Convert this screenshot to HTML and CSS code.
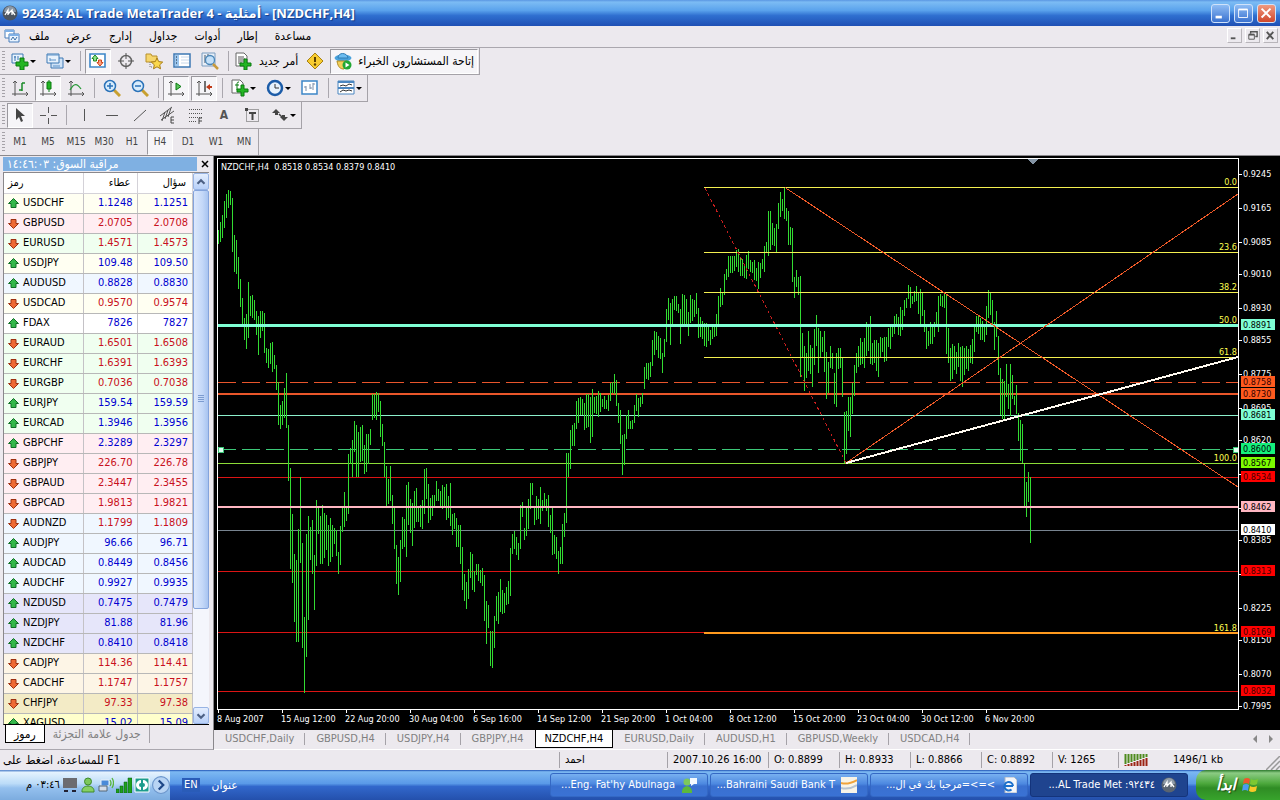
FILE: index.html
```html
<!DOCTYPE html>
<html lang="ar">
<head>
    <meta charset="UTF-8">
    <meta name="viewport" content="width=device-width, initial-scale=1.0">
    <title>92434: AL Trade MetaTrader 4 - أمثلية - [NZDCHF,H4]</title>
    <link rel="stylesheet" href="styles.css">
</head>
<body>
    <header class="titlebar">
        <svg class="icon16" viewBox="0 0 16 16"><circle cx="8" cy="8" r="7.5" fill="#4b5460"/><path d="M2 7a6 6 0 0 1 12 0z" fill="#8b98a6"/><path d="M3 10l3-5v5M6 9l4-4v5M10 6l3 4" stroke="#fff" fill="none" stroke-width="1.3"/></svg>
        <h1>92434: AL Trade MetaTrader 4 - أمثلية - [NZDCHF,H4]</h1>
        <div class="win-buttons">
            <button type="button" class="win-btn" aria-label="minimize"><svg viewBox="0 0 19 19"><path d="M4 12h7v3H4z" fill="#fff"/></svg></button>
            <button type="button" class="win-btn" aria-label="maximize"><svg viewBox="0 0 19 19"><path d="M4 5h10v9H4z" fill="none" stroke="#fff"/><path d="M4 4h10v2H4z" fill="#fff"/></svg></button>
            <button type="button" class="win-btn close" aria-label="close"><svg viewBox="0 0 19 19"><path d="M4 4l10 10M14 4L4 14" stroke="#fff" stroke-width="2.2"/></svg></button>
        </div>
    </header>

    <nav class="menubar">
        <svg class="icon16" viewBox="0 0 16 16"><path d="M1 2h9v8H1z" fill="#fff" stroke="#4a7ebb"/><path d="M1 2h9v2H1z" fill="#7fb0e6"/><path d="M5 6h10v8H5z" fill="#eaf4ff" stroke="#4a7ebb"/><path d="M5 6h10v2H5z" fill="#7fb0e6"/><path d="M7 12l2-3 2 3 2-3" fill="none" stroke="#3a6ea5"/></svg>
        <div class="menu-items">
            <a href="#">ملف</a>
            <a href="#">عرض</a>
            <a href="#">إدارج</a>
            <a href="#">جداول</a>
            <a href="#">أدوات</a>
            <a href="#">إطار</a>
            <a href="#">مساعدة</a>
        </div>
        <div class="mdi-buttons">
            <button type="button" aria-label="minimize"><svg viewBox="0 0 14 14"><path d="M3 9h5v2H3z" fill="#555"/></svg></button>
            <button type="button" aria-label="restore"><svg viewBox="0 0 14 14"><path d="M5 5V3h7v5h-2" fill="none" stroke="#555" stroke-width="1.5"/><path d="M3 6h6v5H3z" fill="none" stroke="#555"/><path d="M3 5h6v2H3z" fill="#555"/></svg></button>
            <button type="button" aria-label="close"><svg viewBox="0 0 14 14"><path d="M3 3l7 8M10 3l-7 8" stroke="#555" stroke-width="2"/></svg></button>
        </div>
    </nav>

    <section class="toolbars">
        <div class="toolbar-row">
            <div class="toolbar">
                <button type="button" class="tool drop" aria-label="new chart"><svg viewBox="0 0 18 18"><path d="M1 2h11v9H1z" fill="#e8f2fc" stroke="#3c78b4"/><path d="M4 4v5M3 5h2M7 4v4" stroke="#3c78b4"/><path d="M9 6h4v4h4v4h-4v4H9v-4H5v-4h4z" fill="#23b523" stroke="#0a7a10"/></svg></button>
                <button type="button" class="tool drop" aria-label="profiles"><svg viewBox="0 0 18 18"><path d="M5 6h12v10H5z" fill="#cfe2f6" stroke="#3c78b4"/><path d="M1 2h12v9H1z" fill="#e8f2fc" stroke="#3c78b4"/><path d="M1 3h12M4 6v3M4 8h6M7 14h7" stroke="#5c92c8"/></svg></button>
                <span class="sep"></span>
                <button type="button" class="tool pressed" aria-label="market watch"><svg viewBox="0 0 18 18"><path d="M1 2h15v13H1z" fill="#fff" stroke="#3c86c8" stroke-width="1.6"/><path d="M6 3l3 3.500H7.500V9h-3V6.500H3z" fill="#8ce08c" stroke="#1e8a1e"/><path d="M11 14l-3-3.500h1.500V8h3v2.500H14z" fill="#f8a080" stroke="#d04418"/></svg></button>
                <button type="button" class="tool" aria-label="data window"><svg viewBox="0 0 18 18"><circle cx="9" cy="9" r="5.500" fill="none" stroke="#666" stroke-width="1.500"/><path d="M9 1v6M9 11v6M1 9h6M11 9h6" stroke="#555"/></svg></button>
                <button type="button" class="tool" aria-label="navigator"><svg viewBox="0 0 18 18"><path d="M1 2h5l1 2h5v6H1z" fill="#f6d66c" stroke="#b8902c"/><path d="M5 10v5h3" stroke="#777" fill="none" stroke-dasharray="1 1"/><path d="M12 6l1.700 3.600 4 .5-3 2.700.8 4-3.500-2-3.500 2 .8-4-3-2.700 4-.5z" fill="#fbd84c" stroke="#a87c14"/></svg></button>
                <button type="button" class="tool" aria-label="terminal"><svg viewBox="0 0 18 18"><path d="M1 2h16v13H1z" fill="#fff" stroke="#3c78b4" stroke-width="1.500"/><path d="M2 3h4v11H2z" fill="#9cc6ee"/><path d="M3 5h1M3 8h1M3 11h1" stroke="#123"/><path d="M8 5h8M8 8h8M8 11h8" stroke="#c8d8ea"/></svg></button>
                <button type="button" class="tool" aria-label="strategy tester"><svg viewBox="0 0 18 18"><path d="M1 1h13v13H1z" fill="#e8eef6" stroke="#7a9cc0"/><path d="M4 3v8M7 2v5" stroke="#456"/><circle cx="9" cy="8" r="4.500" fill="#c4e0f8" stroke="#4a86b8" stroke-width="1.300"/><path d="M12 12l5 5" stroke="#c89a3c" stroke-width="2.500"/></svg></button>
                <span class="sep"></span>
                <button type="button" class="tool text"><svg viewBox="0 0 18 18"><path d="M1 1h8l3 3v10H1z" fill="#fff" stroke="#666"/><path d="M3 5h6M3 7h7M3 9h7M3 11h4" stroke="#555"/><path d="M9 7h3v4h4v3h-4v4H9v-4H5v-3h4z" fill="#23b523" stroke="#0a7a10"/></svg><span>أمر جديد</span></button>
                <button type="button" class="tool" aria-label="metaeditor"><svg viewBox="0 0 18 18"><path d="M9 1l8 8-8 8-8-8z" fill="#f8cc30" stroke="#a88010"/><path d="M9 5v5" stroke="#5a4000" stroke-width="2"/><circle cx="9" cy="12.500" r="1.200" fill="#5a4000"/></svg></button>
                <button type="button" class="tool text pressed"><svg viewBox="0 0 18 18"><ellipse cx="9" cy="6" rx="8.500" ry="3.500" fill="#4aa2dc"/><path d="M4 6c0-6 9-6 10 0z" fill="#6cbcf0" stroke="#2f7cb4"/><path d="M3 9c1 7 4 8 7 8l3-8z" fill="#f2cf58" stroke="#b08c24"/><circle cx="13" cy="13" r="4.500" fill="#22a833"/><path d="M11.500 10.500v5l4-2.500z" fill="#fff"/></svg><span>إتاحة المستشارون الخبراء</span></button>
            </div>
        </div>

        <div class="toolbar-row">
            <div class="toolbar">
                <button type="button" class="tool" aria-label="bar chart"><svg viewBox="0 0 18 18"><path d="M4 2v13h13M2 4l2-2 2 2M15 13l2 2-2 2M1 15h3M4 15v2" fill="none" stroke="#555"/><path d="M11 4v8M11 4h3M8 11h3" stroke="#1a8a2a" stroke-width="1.500"/></svg></button>
                <button type="button" class="tool pressed" aria-label="candlesticks"><svg viewBox="0 0 18 18"><path d="M4 2v13h13M2 4l2-2 2 2M15 13l2 2-2 2M1 15h3M4 15v2" fill="none" stroke="#555"/><path d="M10 1v12" stroke="#0a7a10"/><path d="M8 3h4v7H8z" fill="#23b523" stroke="#0a7a10"/></svg></button>
                <button type="button" class="tool" aria-label="line chart"><svg viewBox="0 0 18 18"><path d="M4 2v13h13M2 4l2-2 2 2M15 13l2 2-2 2M1 15h3M4 15v2" fill="none" stroke="#555"/><path d="M3 11c4-7 7-7 11-1" fill="none" stroke="#2a9a3a" stroke-width="1.300"/></svg></button>
                <span class="sep"></span>
                <button type="button" class="tool" aria-label="zoom in"><svg viewBox="0 0 18 18"><path d="M11 11l6 6" stroke="#c8a030" stroke-width="3"/><circle cx="7" cy="7" r="5.500" fill="#d8ecfc" stroke="#2a72b8" stroke-width="1.500"/><path d="M4 7h6M7 4v6" stroke="#2a72b8" stroke-width="1.500"/></svg></button>
                <button type="button" class="tool" aria-label="zoom out"><svg viewBox="0 0 18 18"><path d="M11 11l6 6" stroke="#c8a030" stroke-width="3"/><circle cx="7" cy="7" r="5.500" fill="#d8ecfc" stroke="#2a72b8" stroke-width="1.500"/><path d="M4 7h6" stroke="#2a72b8" stroke-width="1.500"/></svg></button>
                <span class="sep"></span>
                <button type="button" class="tool pressed" aria-label="auto scroll"><svg viewBox="0 0 18 18"><path d="M4 2v13h13M2 4l2-2 2 2M15 13l2 2-2 2M1 15h3M4 15v2" fill="none" stroke="#555"/><path d="M9 4v7l5-3.500z" fill="#5cc45c" stroke="#0a7a10"/></svg></button>
                <button type="button" class="tool pressed" aria-label="chart shift"><svg viewBox="0 0 18 18"><path d="M4 2v13h13M2 4l2-2 2 2M15 13l2 2-2 2M1 15h3M4 15v2" fill="none" stroke="#555"/><path d="M10 2v11" stroke="#444" stroke-width="1.500"/><path d="M11 8l4-3v2h2v2h-2v2z" fill="#c03a18"/></svg></button>
                <span class="sep"></span>
                <button type="button" class="tool drop" aria-label="indicators"><svg viewBox="0 0 18 18"><path d="M1 1h8l3 3v10H1z" fill="#fff" stroke="#666"/><path d="M8 3c-2 0-2 1-2 3v5M4 6h4" fill="none" stroke="#0a7a10"/><path d="M10 6h3v4h4v3h-4v4h-3v-4H6v-3h4z" fill="#23b523" stroke="#0a7a10"/></svg></button>
                <button type="button" class="tool drop" aria-label="periods"><svg viewBox="0 0 18 18"><circle cx="9" cy="9" r="7" fill="#e8f2fc" stroke="#1c5ca8" stroke-width="2.500"/><path d="M9 5v4h4" fill="none" stroke="#333"/></svg></button>
                <button type="button" class="tool" aria-label="templates"><svg viewBox="0 0 18 18"><path d="M1 2h15v13H1z" fill="#fff" stroke="#3c86c8" stroke-width="1.500"/><path d="M5 7v5M5 8H3M9 5v5M9 9h2M12 4v7M12 5h2" stroke="#7a8ea8"/></svg></button>
                <span class="sep"></span>
                <button type="button" class="tool drop" aria-label="windows"><svg viewBox="0 0 18 18"><path d="M1 2h16v13H1z" fill="#fff" stroke="#4a86c0"/><path d="M1 3h16M1 9h16" stroke="#4a86c0" stroke-width="2"/><path d="M3 7l3-1 3 1 3-2 3 1M3 13l3-2 3 1 3-1 3 1" fill="none" stroke="#333"/></svg></button>
            </div>
        </div>

        <div class="toolbar-row">
            <div class="toolbar">
                <button type="button" class="tool pressed" aria-label="cursor"><svg viewBox="0 0 18 18"><path d="M5 2v12l3-3 2 5 2-1-2-5h4z" fill="#444"/></svg></button>
                <button type="button" class="tool" aria-label="crosshair"><svg viewBox="0 0 18 18"><path d="M9.500 1v6M9.500 12v6M1 9.500h6M12 9.500h6" stroke="#555"/></svg></button>
                <span class="sep"></span>
                <button type="button" class="tool" aria-label="vertical line"><svg viewBox="0 0 18 18"><path d="M9.500 3v12" stroke="#555"/></svg></button>
                <button type="button" class="tool" aria-label="horizontal line"><svg viewBox="0 0 18 18"><path d="M3 9.500h12" stroke="#555"/></svg></button>
                <button type="button" class="tool" aria-label="trendline"><svg viewBox="0 0 18 18"><path d="M3 15L15 4" stroke="#555"/></svg></button>
                <button type="button" class="tool" aria-label="equidistant channel"><svg viewBox="0 0 18 18"><path d="M1 10L13 1M2 14L15 5M3 15l3-9M6 13l3-9M9 11l3-9" stroke="#555" fill="none"/><path d="M15 11h-3v6h3M12 14h3" fill="none" stroke="#444"/></svg></button>
                <button type="button" class="tool" aria-label="fibonacci"><svg viewBox="0 0 18 18"><path d="M2 3.500h14M2 7.500h14M2 11.500h14" stroke="#555" stroke-dasharray="1 1"/><path d="M2 15.500h7" stroke="#555" stroke-dasharray="1 1"/><path d="M15 12h-3v6M12 15h3" fill="none" stroke="#444"/></svg></button>
                <button type="button" class="tool letter">A</button>
                <button type="button" class="tool" aria-label="label"><svg viewBox="0 0 18 18"><path d="M3.500 3.500h12v12h-12z" fill="none" stroke="#555" stroke-dasharray="1 1"/><path d="M2 2h3v3H2z" fill="#444"/><path d="M6 7h7M9.500 7v7" stroke="#444" stroke-width="2"/></svg></button>
                <button type="button" class="tool drop" aria-label="arrows"><svg viewBox="0 0 18 18"><path d="M5 3l4 4-2 0v2H4V7H1z" fill="#444"/><path d="M13 15l-4-4h2V9h3v2h3z" fill="#444"/><path d="M8 8l3 3" stroke="#444" stroke-width="1.500"/></svg></button>
            </div>
        </div>

        <div class="toolbar-row">
            <div class="toolbar">
                <button type="button" class="tool period">M1</button>
                <button type="button" class="tool period">M5</button>
                <button type="button" class="tool period">M15</button>
                <button type="button" class="tool period">M30</button>
                <button type="button" class="tool period">H1</button>
                <button type="button" class="tool period pressed">H4</button>
                <button type="button" class="tool period">D1</button>
                <button type="button" class="tool period">W1</button>
                <button type="button" class="tool period">MN</button>
            </div>
        </div>
    </section>

    <main class="workspace">
        <aside class="market">
            <div class="market-title">
                <h2 dir="rtl">مراقبة السوق: ١٤:٤٦:٠٣</h2>
                <button type="button" aria-label="close"><svg viewBox="0 0 8 8"><path d="M1 1l6 6M7 1L1 7" stroke="#000" stroke-width="1.500"/></svg></button>
            </div>
            <div class="market-list">
                <div class="quotes-wrap">
                    <table class="quotes">
                        <thead>
                            <tr><th>رمز</th><th>عطاء</th><th>سؤال</th></tr>
                        </thead>
                        <tbody id="quotes"></tbody>
                    </table>
                </div>
                <div class="scrollbar">
                    <button type="button" class="scroll-btn" aria-label="up"><svg viewBox="0 0 16 16"><path d="M4 10l4-4 4 4" fill="none" stroke="#4d6185" stroke-width="2.500"/></svg></button>
                    <div class="track">
                        <div class="thumb"><i></i></div>
                    </div>
                    <button type="button" class="scroll-btn" aria-label="down"><svg viewBox="0 0 16 16"><path d="M4 6l4 4 4-4" fill="none" stroke="#4d6185" stroke-width="2.500"/></svg></button>
                </div>
            </div>
            <div class="market-tabs">
                <button type="button" class="active">رموز</button>
                <button type="button">جدول علامة التجزئة</button>
            </div>
        </aside>

        <section class="chart-window">
            <svg class="chart" viewBox="214 156 1066 573">
                <text class="chart-head" x="221" y="170" xml:space="preserve">NZDCHF,H4  0.8518 0.8534 0.8379 0.8410</text>

                <g class="levels">
                    <path d="M218 382.500H1238" stroke="#e8552c" stroke-dasharray="18 6"/>
                    <path d="M218 394H1238" stroke="#e8562a" stroke-width="2"/>
                    <path d="M218 415.500H1238" stroke="#8cf0cc"/>
                    <path d="M218 449.500H1238" stroke="#3cc878" stroke-dasharray="18 6"/>
                    <path d="M218 463.500H1238" stroke="#8cdc38"/>
                    <path d="M218 477.500H1238" stroke="#dc1414"/>
                    <path d="M218 530.500H1238" stroke="#788490"/>
                    <path d="M218 571.500H1238" stroke="#dc1414"/>
                    <path d="M218 632.500H1238" stroke="#dc1414"/>
                    <path d="M218 691.500H1238" stroke="#dc1414"/>
                </g>
                <path id="bars" class="bars"/>
                <g class="levels">
                    <path d="M218 325.500H1238" stroke="#7fffd4" stroke-width="3"/>
                    <path d="M218 507H1238" stroke="#ffb6c1" stroke-width="2"/>
                    <path d="M704 187.500H1238M704 252.500H1238M704 292.500H1238M704 357.500H1238" stroke="#f4f050"/>
                    <path d="M704 633H1238" stroke="#ff9a1e" stroke-width="2"/>
                    <path d="M785 187.500L1238 487" stroke="#f05a28"/>
                    <path d="M846 463L1238 194" stroke="#f05a28"/>
                    <path d="M705 188L846 463" stroke="#c81e1e" stroke-dasharray="3 3"/>
                    <path d="M846 463L1238 357" stroke="#fffaf0" stroke-width="2"/>
                    <path d="M218 447h5v5h-5zM1233 447h5v5h-5z" fill="#dffff2" stroke="#3cc878"/>
                    <path d="M1027 159h11l-5 5z" fill="#8494a4"/>
                </g>
                <path class="frame" d="M217.500 158.500H1238.500V709.500H217.500z"/>
                <g id="fibo" class="fibo"></g>
                <g id="prices"></g>
                <g id="times"></g>
            </svg>

            <div class="chart-tabs">
                <button type="button">USDCHF,Daily</button>
                <button type="button">GBPUSD,H4</button>
                <button type="button">USDJPY,H4</button>
                <button type="button" class="before-active">GBPJPY,H4</button>
                <button type="button" class="active">NZDCHF,H4</button>
                <button type="button">EURUSD,Daily</button>
                <button type="button">AUDUSD,H1</button>
                <button type="button">GBPUSD,Weekly</button>
                <button type="button">USDCAD,H4</button>
                <div class="tab-arrows">
                    <svg viewBox="0 0 24 8"><path d="M6 0v8L2 4zM18 0v8l4-4z" fill="#888"/></svg>
                </div>
            </div>
        </section>
    </main>

    <footer class="statusbar">
        <div class="help"><span dir="rtl">F1 للمساعدة، اضغط على</span></div>
        <div class="cell profile">احمد</div>
        <div class="cell date">2007.10.26 16:00</div>
        <div class="cell">O: 0.8899</div>
        <div class="cell">H: 0.8933</div>
        <div class="cell">L: 0.8866</div>
        <div class="cell">C: 0.8892</div>
        <div class="cell volume">V: 1265</div>
        <div class="cell traffic">
            <svg viewBox="0 0 25 12"><path d="M1.500 0v10M4.500 0v9M7.500 0v8M10.500 0v7M13.500 0v6M16.500 0v5M19.500 0v4M22.500 0v3" stroke="#4e8a1e" stroke-width="2"/><path d="M1.500 11v1M4.500 10v2M7.500 9v3M10.500 8v4M13.500 7v5M16.500 6v6M19.500 5v7M22.500 4v8" stroke="#9c2414" stroke-width="2"/></svg>
            <span>1496/1 kb</span>
        </div>
        <svg class="resize" viewBox="0 0 14 14"><path d="M0 14L14 0M5 14l9-9M10 14l4-4" stroke="#999" stroke-width="1.500"/></svg>
    </footer>

    <footer class="taskbar">
        <div class="tray">
            <time dir="rtl">٠٣:٤٦ م</time>
            <svg class="icon16" viewBox="0 0 16 16"><path d="M1 1h14v10H1z" fill="#6c6c70"/><path d="M2 14h4M10 14h4" stroke="#223" stroke-width="2"/></svg>
            <svg class="icon16" viewBox="0 0 16 16"><circle cx="8" cy="4.500" r="3.500" fill="#7cc85c" stroke="#3e8a2c"/><path d="M2 15c-1-8 13-8 12 0z" fill="#86d064" stroke="#3e8a2c"/></svg>
            <svg class="icon16" viewBox="0 0 16 16"><path d="M3 3h8v6H3z" fill="#4a8ad8" stroke="#e8f0fa"/><path d="M1 9h8v5H1z" fill="#d4dce8" stroke="#567"/><path d="M12 3q2 3 0 6M14 1q3 5 0 10" fill="none" stroke="#58b43c" stroke-width="1.300"/></svg>
            <svg class="icon16" viewBox="0 0 16 16"><path d="M0 12h3v4H0zM4 9h3v7H4zM8 5h3v11H8zM12 1h4v15h-4z" fill="#1ea01e" stroke="#0a5a10" stroke-width=".5"/></svg>
            <svg class="icon16" viewBox="0 0 16 16"><path d="M1 1h14v14H1z" fill="#1c9c8c" stroke="#fff"/><path d="M7 3a5 5 0 0 0 0 10V10a2 2 0 0 1 0-4zM9 3a5 5 0 0 1 0 10v-3a2 2 0 0 0 0-4z" fill="#fff"/></svg>
            <svg class="icon16" viewBox="0 0 16 16"><circle cx="8" cy="8" r="7.500" fill="#b8d4f4" stroke="#6c96cc"/><path d="M6 4l4 4-4 4" fill="none" stroke="#1f4888" stroke-width="2"/></svg>
        </div>
        <span class="lang">EN</span>
        <span class="address">عنوان</span>
        <div class="tasks">
            <button type="button" class="task" dir="rtl"><svg class="icon16" viewBox="0 0 16 16"><circle cx="6" cy="5" r="3.500" fill="#7cc85c"/><path d="M1 16c-1-9 11-9 10 0z" fill="#5cb83c"/><path d="M9 1h7v6h-3l-3 2V7H9z" fill="#f4faff"/></svg><span>Eng. Fat'hy Abulnaga...</span></button>
            <button type="button" class="task" dir="rtl"><svg class="icon16" viewBox="0 0 16 16"><path d="M0 0h16v16H0z" fill="#f8f4e8"/><path d="M0 6q7 2 16-3" fill="none" stroke="#f0a43c" stroke-width="2"/><path d="M0 11q8 2 16-3" fill="none" stroke="#b8c4d0" stroke-width="2"/></svg><span>Bahraini Saudi Bank T...</span></button>
            <button type="button" class="task" dir="rtl"><svg class="icon16" viewBox="0 0 16 16"><path d="M4 0h9l3 3v13H4z" fill="#f4f6fa" stroke="#a8b4c4"/><path d="M12 9H4M12 9a4.300 4.300 0 1 0-1.500 3.500" fill="none" stroke="#1c70cc" stroke-width="2"/></svg><span>&gt;=&gt;=مرحبا بك في ال...</span></button>
            <button type="button" class="task current" dir="rtl"><svg class="icon16" viewBox="0 0 16 16"><circle cx="8" cy="8" r="7.500" fill="#5a6470"/><path d="M2 7a6 6 0 0 1 12 0z" fill="#909ca8"/><path d="M3 10l3-5v5M6 9l4-4v5M10 6l3 4" stroke="#fff" fill="none" stroke-width="1.300"/></svg><span>٩٢٤٣٤: AL Trade Met...</span></button>
        </div>
        <button type="button" class="start"><span>ابدأ</span><svg viewBox="0 0 18 18"><path d="M2 3q3-2 6 0L7 8Q4 6 1 8z" fill="#f0562c"/><path d="M9 3q3 2 7 0l-1 5q-3 2-7 0z" fill="#7cc832"/><path d="M1 9q3-2 6 0l-1 6q-3-2-6 0z" fill="#4c9cf0"/><path d="M8 10q3 2 7 0l-1 5q-4 2-7 0z" fill="#f8c828"/></svg></button>
    </footer>

    <script src="script.js"></script>
</body>
</html>
```
FILE: styles.css
```css
* {
    box-sizing: border-box;
    margin: 0;
    padding: 0;
}
body {
    font-family: "DejaVu Sans Condensed", "DejaVu Sans", sans-serif;
    font-size: 11px;
    line-height: 14px;
    color: #000;
    background: #ece9ee;
    height: 100vh;
    display: flex;
    flex-direction: column;
    overflow: hidden;
}
button {
    font: inherit;
    color: inherit;
    background: none;
    border: 0;
}
svg {
    display: block;
    flex: none;
}
.icon16 {
    width: 16px;
    height: 16px;
}

/* title */
.titlebar {
    height: 26px;
    flex: none;
    display: flex;
    align-items: center;
    gap: 4px;
    padding: 0 4px 0 2px;
    background: linear-gradient(#5a96e2 0%, #7cbcf4 8%, #5aa2ec 40%, #2f6fd0 60%, #1f50b4 100%);
}
.titlebar h1 {
    flex: 1;
    font-family: "Open Sans", "DejaVu Sans", sans-serif;
    font-size: 13px;
    line-height: 20px;
    font-weight: bold;
    color: #fff;
    text-shadow: 1px 1px 1px #123a86;
    white-space: nowrap;
}
.win-buttons {
    display: flex;
    gap: 4px;
}
.win-btn {
    width: 19px;
    height: 19px;
    border: 1px solid #cfe2fa;
    border-radius: 3px;
    background: linear-gradient(#8ebcf4, #3a72d0);
}
.win-btn.close {
    background: linear-gradient(#f09a80, #d0482c);
}

/* menu */
.menubar {
    height: 22px;
    flex: none;
    display: flex;
    align-items: center;
    padding: 0 2px 2px 4px;
    border-bottom: 1px solid #aaa7ae;
}
.menu-items {
    flex: 1;
    display: flex;
    gap: 17px;
    padding-left: 9px;
    font-size: 12px;
}
.menu-items a {
    color: #000;
    text-decoration: none;
}
.mdi-buttons {
    display: flex;
    gap: 3px;
}
.mdi-buttons button {
    width: 15px;
    height: 15px;
    border: 1px solid;
    border-color: #fff #b8b5ba #b8b5ba #fff;
}

/* toolbars */
.toolbars {
    flex: none;
    border-bottom: 1px solid #8a888c;
}
.toolbar-row {
    height: 27px;
    display: flex;
}
.toolbar-row:last-child {
    height: 26px;
}
.toolbar {
    display: flex;
    align-items: center;
    padding-left: 6px;
    border-right: 1px solid #a5a2a8;
    border-bottom: 1px solid #a5a2a8;
    background: repeating-linear-gradient(#a5a2a8 0 1px, transparent 1px 3px) 2px 3px / 3px 21px no-repeat;
}
.toolbar-row:last-child .toolbar {
    border-bottom: 0;
}
.tool {
    width: 28px;
    height: 25px;
    display: flex;
    align-items: center;
    justify-content: center;
}
.tool svg {
    width: 18px;
    height: 18px;
}
.tool.drop {
    width: 35px;
    gap: 1px;
}
.tool.drop::after {
    content: "";
    border: 3px solid transparent;
    border-top-color: #000;
    border-bottom: 0;
}
.tool.pressed {
    width: 26px;
    margin: 0 1px;
    border: 1px solid;
    border-color: #9a989e #fff #fff #9a989e;
    background: #f6f5f8;
}
.tool.text {
    width: auto;
    gap: 6px;
    padding: 0 3px;
    font-size: 12px;
}
.tool.letter {
    font-size: 12px;
    font-weight: bold;
    color: #555;
}
.tool.period {
    font-size: 10px;
    color: #444;
}
.sep {
    width: 8px;
    height: 20px;
    background: linear-gradient(#aaa7ae, #aaa7ae) 4px 0 / 1px 100% no-repeat;
}

/* workspace */
.workspace {
    flex: 1;
    min-height: 0;
    display: flex;
}
.market {
    width: 214px;
    flex: none;
    display: flex;
    flex-direction: column;
    padding: 1px 4px 4px 3px;
    border-right: 1px solid #8a888c;
    border-bottom: 1px solid #aaa7ae;
}
.market-title {
    height: 14px;
    margin-bottom: 1px;
    display: flex;
    align-items: center;
    gap: 4px;
}
.market-title h2 {
    flex: 1;
    height: 14px;
    padding: 0 4px;
    font-size: 12px;
    line-height: 14px;
    font-weight: normal;
    text-align: left;
    color: #fff;
    background: #7fb0e2;
}
.market-title svg {
    width: 8px;
    height: 8px;
}
.market-list {
    flex: 1;
    min-height: 0;
    display: flex;
    border-left: 1px solid #8a888c;
    border-top: 1px solid #8a888c;
    border-bottom: 1px solid #000;
    background: #fff;
}
.quotes-wrap {
    flex: 1;
    overflow: hidden;
}
.quotes {
    width: 100%;
    table-layout: fixed;
    border-collapse: collapse;
}
.quotes tr {
    height: 20px;
}
.quotes th,
.quotes td {
    padding: 0 4px;
    border-right: 1px solid #c4c2c6;
    border-bottom: 1px solid #b8b8b8;
    font-weight: normal;
    line-height: 16px;
    text-align: right;
}
.quotes th {
    border-color: #d4d2d8;
    padding-right: 6px;
}
.quotes th:first-child {
    width: 79px;
}
.quotes th:nth-child(2) {
    width: 54px;
}
.quotes th:first-child,
.quotes td:first-child {
    text-align: left;
}
.quotes .symbol {
    display: flex;
    align-items: center;
    gap: 4px;
}
.quotes .symbol svg {
    width: 11px;
    height: 11px;
}
.quotes .up { color: #0000d0; }
.quotes .down { color: #c81020; }
.quotes td:first-child { color: #000; }
.usd { background: #fffff2; }
.gbp { background: #ffeef2; }
.eur { background: #f0fff0; }
.aud { background: #f0f7ff; }
.nzd { background: #e6e6fa; }
.cad { background: #fdf5e6; }
.chf { background: #f3ebc6; }
.xag { background: #ffffcc; }

.scrollbar {
    width: 16px;
    flex: none;
    display: flex;
    flex-direction: column;
    background: #f4f6fc;
}
.scroll-btn {
    height: 17px;
    border: 1px solid #98b4e4;
    border-radius: 2px;
    background: linear-gradient(#e4eefe, #b8d0f8);
}
.scroll-btn svg {
    width: 14px;
    height: 14px;
}
.track {
    flex: 1;
}
.thumb {
    height: 81%;
    display: flex;
    align-items: center;
    justify-content: center;
    border: 1px solid #84a4dc;
    border-radius: 2px;
    background: linear-gradient(90deg, #dce8fc, #c4d8f8 60%, #a8c4f0);
}
.thumb i {
    width: 6px;
    height: 8px;
    background: repeating-linear-gradient(#7c9cd0 0 1px, transparent 1px 2px);
}
.market-tabs {
    height: 20px;
    display: flex;
    align-items: flex-start;
    padding-left: 2px;
}
.market-tabs button {
    height: 18px;
    padding: 0 8px;
    font-size: 12px;
    color: #808080;
    border-right: 1px solid #a5a2a8;
    line-height: 16px;
}
.market-tabs .active {
    color: #000;
    background: #fff;
    border: 1px solid #000;
    border-top: 0;
}

/* chart */
.chart-window {
    flex: 1;
    min-width: 0;
    display: flex;
    flex-direction: column;
}
.chart {
    flex: 1;
    min-height: 0;
    width: 100%;
    background: #000;
}
.chart text {
    font-size: 9px;
    fill: #fff;
}
.chart .fibo text {
    fill: #ffff50;
    text-anchor: end;
}
.levels {
    fill: none;
    shape-rendering: crispEdges;
}
.bars {
    stroke: #32dc32;
    shape-rendering: crispEdges;
}
.frame {
    fill: none;
    stroke: #fff;
    shape-rendering: crispEdges;
}
.chart-tabs {
    height: 21px;
    flex: none;
    display: flex;
    align-items: flex-start;
    border-top: 1px solid #000;
    border-bottom: 1px solid #fff;
}
.chart-tabs button {
    height: 18px;
    padding: 0 11px;
    color: #808080;
    background: linear-gradient(#a5a2a8, #a5a2a8) 100% 3px / 1px 12px no-repeat;
}
.chart-tabs .before-active {
    background: none;
}
.chart-tabs .active {
    padding: 0 9px;
    color: #000;
    background: #fff;
    border: 1px solid #000;
    border-top: 0;
}
.tab-arrows {
    margin-left: auto;
    padding: 5px 5px 0 0;
}
.tab-arrows svg {
    width: 24px;
    height: 8px;
}

/* status */
.statusbar {
    height: 20px;
    flex: none;
    display: flex;
    align-items: center;
}
.help {
    flex: 1;
    padding-left: 3px;
    font-size: 12px;
}
.cell {
    width: 71px;
    height: 16px;
    padding-left: 5px;
    line-height: 16px;
    border-left: 1px solid #a5a2a8;
    white-space: nowrap;
}
.profile {
    width: 108px;
}
.date {
    width: 101px;
}
.volume {
    width: 66px;
}
.traffic {
    width: 148px;
    display: flex;
    align-items: center;
    gap: 24px;
}
.traffic svg {
    width: 25px;
    height: 12px;
}
.resize {
    width: 14px;
    height: 14px;
    align-self: flex-end;
}

/* taskbar */
.taskbar {
    height: 30px;
    flex: none;
    display: flex;
    align-items: center;
    color: #fff;
    background: linear-gradient(#1f52b4 0%, #7cb8f2 6%, #5a9ae8 45%, #3268cc 55%, #2450ac 100%);
}
.tray {
    height: 30px;
    display: flex;
    align-items: center;
    gap: 2px;
    padding-left: 16px;
    color: #000;
    background: linear-gradient(#4a7cc8 0%, #e4f2fe 8%, #bcdcf8 45%, #94c0ee 60%, #7cacdf 100%);
}
.tray time {
    padding-left: 10px;
}
.tray svg:last-child {
    width: 18px;
    height: 18px;
}
.lang {
    margin: 0 12px;
    padding: 0 2px;
    background: #2a5cb8;
}
.address {
    font-size: 12px;
}
.tasks {
    margin-left: auto;
    display: flex;
    gap: 2px;
}
.task {
    width: 158px;
    height: 24px;
    display: flex;
    align-items: center;
    gap: 6px;
    padding: 0 10px;
    border: 1px solid #3468c4;
    border-radius: 3px;
    background: linear-gradient(#78b0f0, #4c88e0 45%, #3a70d0 55%, #3a72d4);
    white-space: nowrap;
}
.task.current {
    border-color: #14347c;
    background: #1f448f;
}
.start {
    width: 84px;
    height: 30px;
    margin-left: 8px;
    display: flex;
    align-items: center;
    justify-content: center;
    gap: 6px;
    border-radius: 10px 0 0 10px;
    background: linear-gradient(#2e7a2e 0%, #8ccc84 10%, #4ca83c 45%, #2f8c24 60%, #38a42c 100%);
    font-size: 16px;
    line-height: 20px;
    font-style: italic;
    font-weight: bold;
    text-shadow: 1px 1px 1px #1c4a14;
}
.start svg {
    width: 18px;
    height: 18px;
}
```
FILE: script.js
```js
const quotes = [
    ['USDCHF', '1.1248', '1.1251', 'up', 'usd'],
    ['GBPUSD', '2.0705', '2.0708', 'down', 'gbp'],
    ['EURUSD', '1.4571', '1.4573', 'down', 'eur'],
    ['USDJPY', '109.48', '109.50', 'up', 'usd'],
    ['AUDUSD', '0.8828', '0.8830', 'up', 'aud'],
    ['USDCAD', '0.9570', '0.9574', 'down', 'usd'],
    ['FDAX', '7826', '7827', 'up', ''],
    ['EURAUD', '1.6501', '1.6508', 'down', 'eur'],
    ['EURCHF', '1.6391', '1.6393', 'down', 'eur'],
    ['EURGBP', '0.7036', '0.7038', 'down', 'eur'],
    ['EURJPY', '159.54', '159.59', 'up', 'eur'],
    ['EURCAD', '1.3946', '1.3956', 'up', 'eur'],
    ['GBPCHF', '2.3289', '2.3297', 'up', 'gbp'],
    ['GBPJPY', '226.70', '226.78', 'down', 'gbp'],
    ['GBPAUD', '2.3447', '2.3455', 'down', 'gbp'],
    ['GBPCAD', '1.9813', '1.9821', 'down', 'gbp'],
    ['AUDNZD', '1.1799', '1.1809', 'down', 'aud'],
    ['AUDJPY', '96.66', '96.71', 'up', 'aud'],
    ['AUDCAD', '0.8449', '0.8456', 'up', 'aud'],
    ['AUDCHF', '0.9927', '0.9935', 'up', 'aud'],
    ['NZDUSD', '0.7475', '0.7479', 'up', 'nzd'],
    ['NZDJPY', '81.88', '81.96', 'up', 'nzd'],
    ['NZDCHF', '0.8410', '0.8418', 'up', 'nzd'],
    ['CADJPY', '114.36', '114.41', 'down', 'cad'],
    ['CADCHF', '1.1747', '1.1757', 'down', 'cad'],
    ['CHFJPY', '97.33', '97.38', 'down', 'chf'],
    ['XAGUSD', '15.02', '15.09', 'up', 'xag']
];
const arrows = {
    up: '<path d="M5.500 .5l5 5H8v4H3v-4H.5z" fill="#34b84a" stroke="#0f6e24"/>',
    down: '<path d="M5.500 10.500l-5-5H3v-4h5v4h2.500z" fill="#ee6a34" stroke="#9c3010"/>'
};
document.querySelector('#quotes').innerHTML = quotes.map(([name, bid, ask, dir, group]) => `
    <tr class="${group}">
        <td><div class="symbol"><svg viewBox="0 0 11 11">${arrows[dir]}</svg>${name}</div></td>
        <td class="${dir}">${bid}</td>
        <td class="${dir}">${ask}</td>
    </tr>`).join('');

// top and bottom of every H4 bar, one bar each 2 units
const bars = `
230-244 222-242 215-238 201-228 194-218 190-208 191-205 198-252 235-272 240-274 257-289 279-307 298-324 318-340 314-349 282-338 296-316 295-318 300-320 311-335
316-355 311-338 311-331 313-353 348-363 349-368 343-364 342-372 355-369 365-390 382-425 405-429 401-425 388-418 373-428 425-481 468-569 514-583 554-622 560-642
529-642 477-563 543-648 617-693 534-657 516-620 527-560 520-574 555-610 500-566 507-534 516-564 505-564 513-558 515-550 525-566 518-562 525-557 528-544 530-556
552-574 526-565 507-532 492-527 508-521 454-514 448-464 440-477 421-452 425-477 432-477 427-462 425-461 445-474 434-472 434-464 429-445 394-420 394-418 392-420
393-412 401-437 424-446 442-477 466-507 479-504 466-501 495-524 507-549 545-584 557-595 540-582 517-549 519-547 485-557 482-525 499-533 503-546 491-528 488-522
507-522 505-527 500-529 469-514 468-499 484-523 498-520 495-516 495-506 481-501 489-501 491-506 485-509 487-507 484-520 496-518 483-526 514-535 513-529 518-547
525-547 525-564 547-590 574-601 582-609 569-599 552-578 554-590 571-592 564-575 564-581 570-583 568-586 575-621 601-644 605-628 631-666 631-668 616-648 596-621
592-624 579-612 590-614 593-613 587-605 581-604 548-596 534-554 531-549 537-555 543-560 505-549 502-517 528-540 507-536 499-529 483-509 483-495 506-525 496-520
499-519 487-524 500-511 493-508 499-511 495-527 515-533 507-555 535-554 537-559 551-574 547-564 524-564 513-537 453-523 453-477 430-469 425-446 423-446 401-429
398-423 397-415 399-415 403-430 394-428 394-427 397-443 389-437 397-413 396-414 391-417 393-412 399-407 396-409 400-409 395-411 383-401 382-393 374-394 380-406
403-423 410-444 435-475 434-465 415-439 410-429 421-429 420-429 405-423 394-411 398-417 397-407 393-404 367-389 363-379 363-380 362-377 340-366 331-355 332-350
336-358 338-359 353-373 339-357 309-342 298-320 303-345 299-324 296-310 296-311 304-313 309-344 294-324 295-324 299-325 312-336 295-323 299-321 300-317 293-314
308-338 317-337 321-339 323-346 323-347 327-341 330-345 327-339 325-337 314-336 296-324 288-307 292-305 274-295 269-280 256-277 256-273 256-273 256-271 250-267
249-272 257-276 259-276 266-278 255-279 251-269 260-272 262-273 260-280 268-281 262-289 263-278 259-269 246-272 242-253 211-256 211-250 223-245 228-246 224-252
203-229 192-217 199-211 187-219 208-221 211-245 227-245 228-282 277-298 270-287 277-295 276-377 333-358 346-391 353-378 331-371 345-374 348-387 329-365 315-346
328-373 331-357 337-352 331-372 352-399 362-393 346-368 353-369 373-404 353-407 348-369 348-368 357-397 412-463 411-454 397-431 397-437 383-414 365-396 353-373
346-367 338-365 342-364 338-368 322-356 327-351 316-364 343-365 340-363 340-371 343-377 337-358 338-352 337-362 337-361 328-347 327-349 326-337 316-334 314-327
317-335 307-336 310-330 300-316 298-308 285-299 287-308 296-304 291-302 286-301 293-314 289-324 292-316 310-332 324-349 331-346 322-344 327-344 322-337 312-326
296-332 294-306 296-307 292-308 294-354 328-363 348-381 344-379 346-370 352-374 343-367 347-381 346-387 348-375 346-369 349-371 345-363 339-364 326-352 316-332
316-334 318-340 321-340 325-342 306-335 290-318 292-315 300-325 322-350 311-337 336-375 368-415 379-419 381-419 364-397 384-409 364-416 375-399 396-405 385-414
413-441 420-461 424-463 464-506 482-517 472-502 477-543`;
document.querySelector('#bars').setAttribute('d', bars.trim().split(/\s+/).map((bar, i) => {
    const [top, bottom] = bar.split('-');
    return `M${218.5 + i * 2} ${top}V${bottom}`;
}).join(''));

const fibo = [[187, '0.0'], [252, '23.6'], [292, '38.2'], [325, '50.0'], [357, '61.8'], [463, '100.0'], [633, '161.8']];
document.querySelector('#fibo').innerHTML = fibo.map(([y, label]) =>
    `<text x="1237" y="${y - 2}">${label}</text>`).join('');

const scale = [
    [174, '0.9245'], [208, '0.9165'], [242, '0.9085'], [274, '0.9010'], [308, '0.8930'], [340, '0.8855'],
    [374, '0.8775'], [408, '0.8695'], [440, '0.8620'], [540, '0.8385'],
    [608, '0.8225'], [640, '0.8150'], [674, '0.8070'], [706, '0.7995']
];
const tags = [
    [325, '0.8891', '#7fffd4', '#000'], [382, '0.8758', '#ff5a1e', '#300'], [394, '0.8730', '#ff5a1e', '#300'],
    [415, '0.8681', '#7fffd4', '#000'], [449, '0.8600', '#14f07c', '#000'], [463, '0.8567', '#7cfc00', '#000'],
    [477, '0.8534', '#ff0000', '#400'], [507, '0.8462', '#ffb6c1', '#000'], [530, '0.8410', '#ffffff', '#000'],
    [571, '0.8313', '#ff0000', '#400'], [632, '0.8169', '#ff0000', '#400'], [691, '0.8032', '#ff0000', '#400']
];
document.querySelector('#prices').innerHTML = scale.map(([y, label]) =>
    `<path d="M1239 ${y}.5h3" stroke="#fff"/><text x="1243" y="${y + 3}">${label}</text>`).join('') +
    '<path d="M1239 474.5h3M1239 508.5h3M1239 574.5h3" stroke="#fff"/>' +
    tags.map(([y, label, bg, color]) =>
    `<rect x="1241" y="${y - 6}" width="34" height="11" fill="${bg}"/><text x="1243" y="${y + 3}" style="fill:${color}">${label}</text>`).join('');

const times = [
    '8 Aug 2007', '15 Aug 12:00', '22 Aug 20:00', '30 Aug 04:00', '6 Sep 16:00', '14 Sep 12:00', '21 Sep 20:00',
    '1 Oct 04:00', '8 Oct 12:00', '15 Oct 20:00', '23 Oct 04:00', '30 Oct 12:00', '6 Nov 20:00'
];
document.querySelector('#times').innerHTML = times.map((label, i) =>
    `<path d="M${218.5 + i * 64} 710v3" stroke="#fff"/><text x="${217 + i * 64}" y="722">${label}</text>`).join('');
```
